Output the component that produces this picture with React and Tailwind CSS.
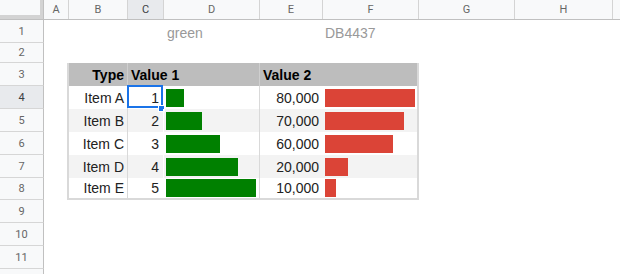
import React from "react";

const items = [
  { label: "Item A", v1: 1, v2: 80000 },
  { label: "Item B", v1: 2, v2: 70000 },
  { label: "Item C", v1: 3, v2: 60000 },
  { label: "Item D", v1: 4, v2: 20000 },
  { label: "Item E", v1: 5, v2: 10000 },
];

const maxV1 = 5;
const maxV2 = 80000;
const barMax = 90;

function RowHeader({ n, active }) {
  return (
    <div
      className={`w-[44px] shrink-0 h-full flex items-center justify-center border-r border-b border-r-[#c0c0c0] border-b-[#d6d6d6] text-[11px] font-['Roboto',sans-serif] ${
        active ? "bg-[#e8eaed] text-[#3c4043]" : "bg-[#f8f9fa] text-[#666]"
      }`}
    >
      {n}
    </div>
  );
}

function ColHeader({ label, w, active }) {
  return (
    <div
      className={`${w} shrink-0 h-full flex items-center justify-center border-r border-[#d4d4d4] text-[11px] font-['Roboto',sans-serif] ${
        active ? "bg-[#e8eaed] text-[#3c4043]" : "bg-[#f8f9fa] text-[#666]"
      }`}
    >
      {label}
    </div>
  );
}

function TableHead() {
  return (
    <div className="flex h-full">
      <div className="w-[23px] shrink-0" />
      <div className="flex h-full bg-[#bdbdbd] border-l-2 border-r-2 border-[#d9d9d9] font-bold text-black">
        <div className="w-[59px] flex items-center justify-end pr-[3px] border-r border-[#cfcfcf]">Type</div>
        <div className="w-[132px] flex items-center pl-[3px] border-r border-[#cfcfcf]">Value 1</div>
        <div className="w-[157px] flex items-center pl-[3px]">Value 2</div>
      </div>
    </div>
  );
}

function TableRow({ item, idx }) {
  const shaded = idx % 2 === 1;
  const last = idx === items.length - 1;
  const bg = shaded ? "bg-[#f3f3f3]" : "bg-white";
  return (
    <div className="flex h-full">
      <div className="w-[23px] shrink-0" />
      <div
        className={`flex h-full border-l-2 border-r-2 border-[#d9d9d9] text-[#222] ${bg} ${
          last ? "border-b-2" : ""
        }`}
      >
        <div className="w-[59px] flex items-center justify-end pr-[3px] border-r border-[#d9d9d9]">
          {item.label}
        </div>
        <div className="relative w-[36px] flex items-center justify-end pr-[4px] border-r border-white">
          {item.v1}
          {idx === 0 && (
            <>
              <div className="absolute -left-px -top-px w-[36px] h-[23px] border-2 border-[#1a73e8]" />
              <div className="absolute left-[30px] top-[19px] w-[7px] h-[7px] bg-[#1a73e8] border border-white" />
            </>
          )}
        </div>
        <div className="w-[96px] flex items-center pl-[2px] border-r border-[#d9d9d9]">
          <div
            className="h-[18px] bg-[#008000]"
            style={{ width: `${(item.v1 / maxV1) * barMax}px` }}
          />
        </div>
        <div className="w-[63px] flex items-center justify-end pr-[4px]">
          {item.v2.toLocaleString("en-US")}
        </div>
        <div className="w-[94px] flex items-center pl-[2px]">
          <div
            className="h-[18px] bg-[#db4437]"
            style={{ width: `${(item.v2 / maxV2) * barMax}px` }}
          />
        </div>
      </div>
    </div>
  );
}

export default function App() {
  const rowHeights = [
    "h-[23px]",
    "h-[20px]",
    "h-[23px]",
    "h-[23px]",
    "h-[23px]",
    "h-[23px]",
    "h-[23px]",
    "h-[22px]",
    "h-[23px]",
    "h-[23px]",
    "h-[23px]",
    "h-[23px]",
  ];

  const renderContent = (r) => {
    if (r === 1) {
      return (
        <div className="flex h-full items-center pt-[2px] text-[#999]">
          <div className="w-[120px] shrink-0" />
          <div className="w-[96px] shrink-0 pl-[3px]">green</div>
          <div className="w-[63px] shrink-0" />
          <div className="w-[96px] shrink-0 pl-[2px]">DB4437</div>
        </div>
      );
    }
    if (r === 3) return <TableHead />;
    if (r >= 4 && r <= 8) return <TableRow item={items[r - 4]} idx={r - 4} />;
    return null;
  };

  return (
    <div className="w-[620px] h-[274px] overflow-hidden bg-white font-['Liberation_Sans',Arial,sans-serif] text-[14px] leading-none">
      {/* column letters */}
      <div className="flex h-[20px] border-b border-[#c0c0c0]">
        <div className="w-[44px] shrink-0 h-full bg-[#f8f9fa] border-r border-[#c0c0c0]">
          <div className="w-full h-full border-r-[3px] border-b-4 border-[#d3d3d3]" />
        </div>
        <ColHeader label="A" w="w-[25px]" />
        <ColHeader label="B" w="w-[59px]" />
        <ColHeader label="C" w="w-[36px]" active />
        <ColHeader label="D" w="w-[96px]" />
        <ColHeader label="E" w="w-[63px]" />
        <ColHeader label="F" w="w-[96px]" />
        <ColHeader label="G" w="w-[96px]" />
        <ColHeader label="H" w="w-[98px]" />
        <div className="flex-1 h-full bg-[#f8f9fa]" />
      </div>

      {rowHeights.map((h, i) => {
        const r = i + 1;
        return (
          <div key={r} className={`flex ${h}`}>
            {/* the last row is only partly in view, so its number stays off */}
            <RowHeader n={r < 12 ? r : ""} active={r === 4} />
            <div className="flex-1 h-full">{renderContent(r)}</div>
          </div>
        );
      })}
    </div>
  );
}
